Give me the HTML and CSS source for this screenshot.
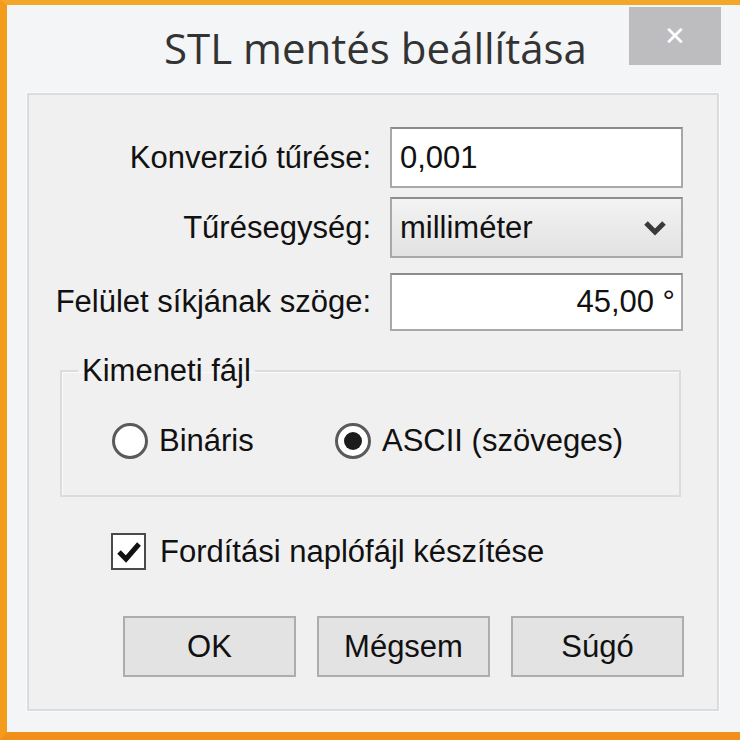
FILE: index.html
```html
<!DOCTYPE html>
<html lang="hu">
<head>
  <meta charset="UTF-8" />
  <title>STL mentés beállítása</title>
  <link rel="stylesheet" href="styles.css">
</head>
<body>

  <div class="window">
    <!-- TITLE BAR -->
    <div class="titlebar">
      <span class="title">STL mentés beállítása</span>
      <div class="close">&#x2715;</div>
    </div>

    <!-- DIALOG BODY -->
    <div class="panel">
      <div class="row">
        <label class="lbl">Konverzió tűrése:</label>
        <div class="field">0,001</div>
      </div>
      <div class="row row-combo">
        <label class="lbl">Tűrésegység:</label>
        <div class="field combo">
          <span>milliméter</span>
          <svg class="chev" width="24" height="16" viewBox="0 0 24 16">
            <polyline points="3,3 12,12 21,3" fill="none" stroke="#3a3a3a" stroke-width="5" />
          </svg>
        </div>
      </div>
      <div class="row row-angle">
        <label class="lbl">Felület síkjának szöge:</label>
        <div class="field right">45,00 °</div>
      </div>

      <fieldset class="group">
        <legend>Kimeneti fájl</legend>
        <div class="radios">
          <div class="opt first"><span class="radio"></span>Bináris</div>
          <div class="opt"><span class="radio on"></span>ASCII (szöveges)</div>
        </div>
      </fieldset>

      <div class="check">
        <span class="box">
          <svg width="26" height="24" viewBox="0 0 26 24">
            <polyline points="3,12 10,19 23,4" fill="none" stroke="#111" stroke-width="5" />
          </svg>
        </span>
        Fordítási naplófájl készítése
      </div>

      <div class="buttons">
        <div class="btn">OK</div>
        <div class="btn">Mégsem</div>
        <div class="btn">Súgó</div>
      </div>
    </div>
  </div>

</body>
</html>
```

FILE: styles.css
```css
body {
  margin: 0;
  background-color: #f4f5f7;
  font-family: "Liberation Sans", Arial, sans-serif;
  color: #111;
}
.window {
  width: 733px;
  height: 727px;
  border-left: 7px solid #f39c1c;
  border-top: 5px solid #f2a62a;
  border-bottom: 8px solid #f0901a;
  background-color: #f4f5f7;
  display: flex;
  flex-direction: column;
}
.titlebar {
  position: relative;
  height: 88px;
  display: flex;
  justify-content: center;
  align-items: flex-start;
}
.title {
  font-family: "Open Sans", sans-serif;
  font-size: 42px;
  color: #333;
  margin-top: 14px;
  margin-left: 4px;
}
.close {
  position: absolute;
  left: 622px;
  top: 2px;
  width: 92px;
  height: 58px;
  background-color: #bdbcbf;
  color: #fff;
  font-size: 26px;
  display: flex;
  align-items: center;
  justify-content: center;
}
.panel {
  margin: 0 21px 21px 20px;
  flex: 1;
  background-color: #f0f0f0;
  border: 2px solid #dcdcdc;
  box-shadow: 0 0 0 1px #fbfbfb;
  padding-top: 32px;
  font-size: 31px;
}
.row {
  display: flex;
  align-items: center;
  gap: 19px;
  height: 61px;
}
.row-combo {
  margin-top: 9px;
}
.row-angle {
  margin-top: 15px;
  height: 58px;
}
.lbl {
  width: 342px;
  text-align: right;
}
.field {
  box-sizing: border-box;
  width: 293px;
  height: 100%;
  background: #fff;
  border: 2px solid #a8a8a8;
  border-top-color: #8c8c8c;
  padding: 0 8px;
  display: flex;
  align-items: center;
}
.right {
  justify-content: flex-end;
  padding-right: 6px;
}
.combo {
  background: linear-gradient(#f3f3f3, #e2e2e2);
  justify-content: space-between;
  padding-right: 14px;
}
.group {
  margin: 23px 36px 0 31px;
  padding: 0;
  border: 2px solid #dcdcdc;
  box-shadow: inset 1px 1px 0 #fafafa;
}
.group legend {
  margin-left: 16px;
  padding: 0 4px;
  line-height: 34px;
}
.radios {
  display: flex;
  padding: 35px 0 36px 50px;
}
.opt {
  display: flex;
  align-items: center;
  gap: 11px;
  white-space: nowrap;
}
.opt.first {
  width: 223px;
}
.radio {
  box-sizing: border-box;
  width: 36px;
  height: 36px;
  border-radius: 50%;
  border: 3px solid #5a5a5a;
  background: #fff;
  display: flex;
  align-items: center;
  justify-content: center;
}
.radio.on::after {
  content: "";
  width: 18px;
  height: 18px;
  border-radius: 50%;
  background: #1c1c1c;
}
.check {
  display: flex;
  align-items: center;
  gap: 14px;
  margin: 36px 0 0 82px;
}
.box {
  box-sizing: border-box;
  width: 35px;
  height: 37px;
  border: 2px solid #4a4a4a;
  background: #fff;
  display: flex;
  align-items: center;
  justify-content: center;
}
.buttons {
  display: flex;
  gap: 21px;
  margin: 46px 0 0 94px;
}
.btn {
  box-sizing: border-box;
  width: 173px;
  height: 61px;
  background: #e3e3e3;
  border: 2px solid #adadad;
  display: flex;
  align-items: center;
  justify-content: center;
}
```
